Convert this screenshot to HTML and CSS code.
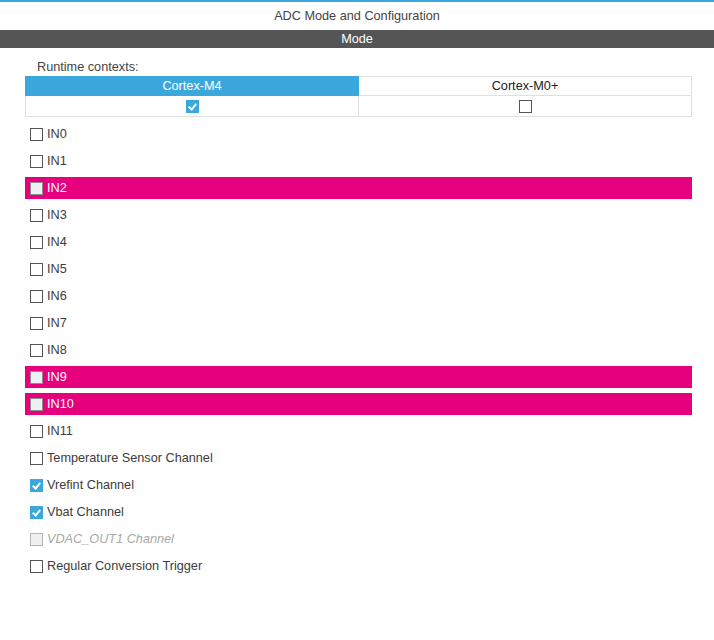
FILE: index.html
```html
<!DOCTYPE html>
<html lang="en">
<head>
<meta charset="UTF-8" />
<title>ADC Mode and Configuration</title>
<link rel="stylesheet" href="styles.css">
</head>
<body>
<div class="topline"></div>
<div class="titulo">ADC Mode and Configuration</div>
<div class="barra">Mode</div>

<div class="contenido">
  <div class="etiqueta">Runtime contexts:</div>
  <table class="contextos">
    <tr>
      <th class="activo">Cortex-M4</th>
      <th>Cortex-M0+</th>
    </tr>
    <tr>
      <td><span class="caja marcada"></span></td>
      <td><span class="caja"></span></td>
    </tr>
  </table>

  <div class="lista">
    <div class="fila"><span class="caja"></span>IN0</div>
    <div class="fila"><span class="caja"></span>IN1</div>
    <div class="fila alerta"><span class="caja"></span>IN2</div>
    <div class="fila"><span class="caja"></span>IN3</div>
    <div class="fila"><span class="caja"></span>IN4</div>
    <div class="fila"><span class="caja"></span>IN5</div>
    <div class="fila"><span class="caja"></span>IN6</div>
    <div class="fila"><span class="caja"></span>IN7</div>
    <div class="fila"><span class="caja"></span>IN8</div>
    <div class="fila alerta"><span class="caja"></span>IN9</div>
    <div class="fila alerta"><span class="caja"></span>IN10</div>
    <div class="fila"><span class="caja"></span>IN11</div>
    <div class="fila"><span class="caja"></span>Temperature Sensor Channel</div>
    <div class="fila"><span class="caja marcada"></span>Vrefint Channel</div>
    <div class="fila"><span class="caja marcada"></span>Vbat Channel</div>
    <div class="fila inactivo"><span class="caja"></span>VDAC_OUT1 Channel</div>
    <div class="fila"><span class="caja"></span>Regular Conversion Trigger</div>
  </div>
</div>
</body>
</html>
```

FILE: styles.css
```css
body { margin: 0; font-family: "Liberation Sans", Arial, sans-serif; font-size: 12.7px; color: #3c3c3c; background: #fff; }
.topline { height: 2px; background: #3aa8dc; }
.titulo { height: 28px; line-height: 29px; text-align: center; color: #444; }
.barra { height: 18px; line-height: 18px; background: #545554; color: #fff; text-align: center; }
.contenido { padding: 0 22px 0 25px; }
.etiqueta { margin-top: 10px; height: 18px; line-height: 18px; padding-left: 12px; color: #444; }
.contextos { width: 100%; border-collapse: collapse; table-layout: fixed; }
.contextos th, .contextos td { border: 1px solid #e0e0e0; padding: 0; text-align: center; font-weight: normal; }
.contextos th { height: 18px; color: #222; }
.contextos th.activo { background: #3aa8dc; color: #fff; border-color: #3aa8dc; }
.contextos td { height: 20px; }
.contextos .caja { margin: 0; vertical-align: middle; }
.lista { padding-top: 6px; display: flex; flex-direction: column; gap: 5px; }
.fila { height: 22px; display: flex; align-items: center; padding-left: 5px; color: #3c3c3c; }
.caja { display: inline-block; width: 11px; height: 11px; border: 1px solid #555; background: #fff; margin-right: 4px; position: relative; }
.caja.marcada { background: #3aa8dc; border-color: #3aa8dc; }
.caja.marcada::after { content: ""; position: absolute; left: 3px; top: 1px; width: 3px; height: 6px; border: solid #fff; border-width: 0 2px 2px 0; transform: rotate(40deg); }
.alerta { background: #e6007e; color: #fff; }
.alerta .caja { background: #eef0f2; border-color: #8c8c8c; }
.inactivo { color: #a8a8a8; font-style: italic; }
.inactivo .caja { background: #eef0f2; border-color: #b4b4b4; }
```
